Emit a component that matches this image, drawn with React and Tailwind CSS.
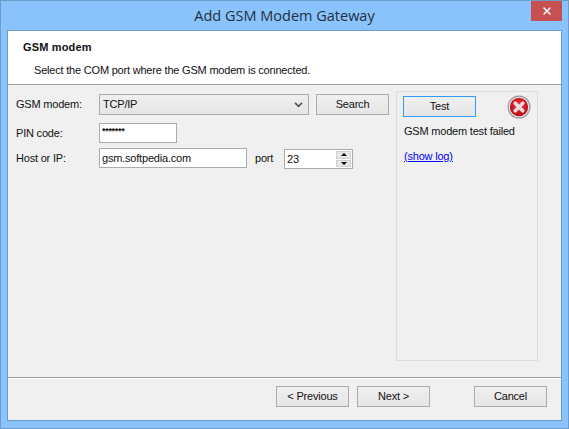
import { X } from 'lucide-react'

const btn = 'h-[21px] w-[73px] border border-[#acacac] bg-gradient-to-b from-[#f0f0f0] to-[#e5e5e5] flex items-center justify-center'
const input = 'h-[20px] border border-[#acacac] bg-white pl-[2px] flex items-center'

function ErrorIcon() {
  return (
    <svg width="24" height="24" viewBox="0 0 24 24" className="-mt-[1px]">
      <defs>
        <radialGradient id="ball" cx="50%" cy="40%" r="60%">
          <stop offset="0%" stopColor="#f0323c" />
          <stop offset="100%" stopColor="#b80c18" />
        </radialGradient>
      </defs>
      <circle cx="12" cy="12" r="11.5" fill="#9a9a9a" />
      <circle cx="12" cy="12" r="10.3" fill="#ececec" />
      <circle cx="12" cy="12" r="9.2" fill="url(#ball)" />
      <path d="M8.2 8.2 L15.8 15.8 M15.8 8.2 L8.2 15.8" stroke="#e9dcdc" strokeWidth="3.6" strokeLinecap="round" />
    </svg>
  )
}

export default function App() {
  return (
    <div className="w-[569px] h-[429px] flex flex-col border border-[#6d9ccb] bg-[#8ac3fb] font-['Liberation_Sans',sans-serif] text-[11px] tracking-[-0.2px] text-[#111] overflow-hidden">
      <div className="h-[29px] shrink-0 flex items-start relative">
        <div className="flex-1 text-center pt-[5px] text-[14.5px] tracking-normal leading-[20px] text-[#22303c] font-['Open_Sans',sans-serif]">Add GSM Modem Gateway</div>
        <div className="absolute right-[6px] top-0 w-[31px] h-[20px] bg-[#c75050] flex items-center justify-center">
          <X size={12} color="#fff" strokeWidth={3} />
        </div>
      </div>

      <div className="mx-[6px] mb-[7px] flex-1 flex flex-col border border-[#6d9ccb] bg-[#f0f0f0]">
        <div className="h-[54px] shrink-0 bg-white border-b border-[#a0a0a0] pl-[15px] pt-[9px]">
          <div className="font-bold leading-[15px] tracking-[0.15px]">GSM modem</div>
          <div className="pl-[11px] mt-[8px] leading-[15px]">Select the COM port where the GSM modem is connected.</div>
        </div>

        <div className="flex-1 flex pl-[8px] pt-[6px]">
          <div className="w-[373px] shrink-0 flex flex-col pt-[3px]">
            <div className="flex items-center">
              <span className="w-[83px]">GSM modem:</span>
              <div className="w-[210px] h-[21px] border border-[#acacac] bg-gradient-to-b from-[#f0f0f0] to-[#e5e5e5] flex items-center justify-between pl-[3px] pr-[5px]">
                <span>TCP/IP</span>
                <svg width="9" height="6" viewBox="0 0 10 7"><path d="M1 1 L5 5 L9 1" fill="none" stroke="#555" strokeWidth="2" /></svg>
              </div>
              <div className={`${btn} ml-[7px]`}>Search</div>
            </div>
            <div className="flex items-center mt-[8px]">
              <span className="w-[83px]">PIN code:</span>
              <div className={`${input} w-[78px]`}>
                <span className="font-bold text-[9px] leading-[9px] tracking-[-0.3px] -mt-[4px]">*******</span>
              </div>
            </div>
            <div className="flex items-center mt-[4px]">
              <span className="w-[83px]">Host or IP:</span>
              <div className={`${input} w-[148px]`}>gsm.softpedia.com</div>
              <span className="ml-[8px] w-[29px]">port</span>
              <div className={`${input} w-[69px] justify-between pr-[1px] mt-[2px]`}>
                <span>23</span>
                <div className="w-[15px] h-[16px] flex flex-col gap-[1px]">
                  <div className="flex-1 bg-[#e6e6e6] border border-[#d0d0d0] flex items-center justify-center">
                    <div className="w-0 h-0 border-x-[3px] border-x-transparent border-b-[3px] border-b-black" />
                  </div>
                  <div className="flex-1 bg-[#e6e6e6] border border-[#d0d0d0] flex items-center justify-center">
                    <div className="w-0 h-0 border-x-[3px] border-x-transparent border-t-[3px] border-t-black" />
                  </div>
                </div>
              </div>
            </div>
          </div>

          <div className="ml-[7px] w-[142px] h-[270px] border border-[#dcdcdc] px-[6px] pt-[4px]">
            <div className="flex items-start justify-between">
              <div className="h-[21px] w-[73px] border border-[#3399ff] bg-gradient-to-b from-[#f0f0f0] to-[#e5e5e5] flex items-center justify-center">Test</div>
              <ErrorIcon />
            </div>
            <div className="mt-[5px] pl-[1px] leading-[15px]">GSM modem test failed</div>
            <a className="block mt-[10px] pl-[1px] leading-[15px] text-[#0000ff] underline">(show log)</a>
          </div>
        </div>

        <div className="h-[43px] shrink-0 border-t border-[#a0a0a0] shadow-[inset_0_1px_0_#ffffff] flex items-start pt-[8px] pl-[268px]">
          <div className={btn}>&lt; Previous</div>
          <div className={`${btn} ml-[8px]`}>Next &gt;</div>
          <div className={`${btn} ml-[44px]`}>Cancel</div>
        </div>
      </div>
    </div>
  )
}
